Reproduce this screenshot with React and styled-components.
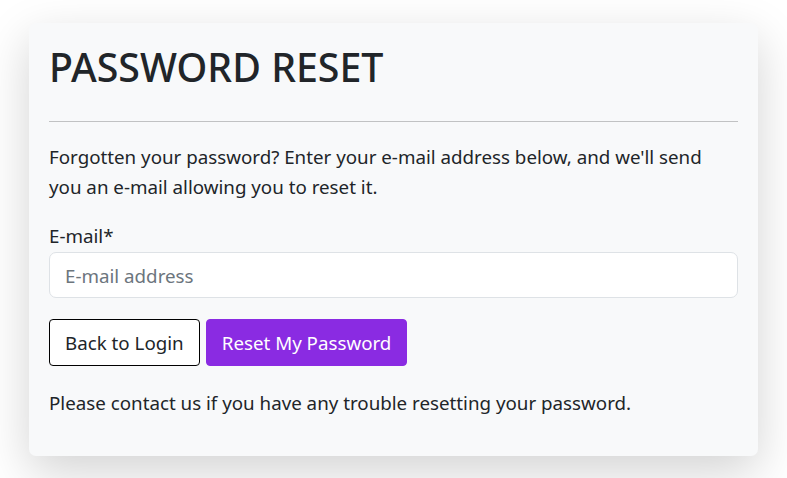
import styled, { createGlobalStyle } from "styled-components";

const GlobalStyles = createGlobalStyle`
  html, body {
    margin: 0;
    min-height: 100%;
    background: #ffffff;
    font-family: "Noto Sans", "Open Sans", sans-serif;
    color: #212529;
  }
  * {
    box-sizing: border-box;
  }
`;

const Page = styled.div`
  min-height: 100vh;
  padding: 23px 29px 40px 29px;
`;

const Card = styled.div`
  width: 729px;
  background: #f8f9fa;
  border-radius: 7px;
  padding: 20px 20px 38px 20px;
  box-shadow: 0 16px 48px rgba(0, 0, 0, 0.175);
`;

const Title = styled.h1`
  margin: 0;
  font-size: 39.3px;
  line-height: 48px;
  font-weight: 500;
  color: #212529;
`;

const Rule = styled.hr`
  margin: 30px 0 20px 0;
  border: 0;
  border-top: 1px solid #c1c2c3;
`;

const Text = styled.p`
  margin: ${(p) => p.$margin || "0"};
  font-size: 18.75px;
  line-height: 30px;
`;

const Label = styled.label`
  display: block;
  margin: 22px 0 4px 0;
  font-size: 18.75px;
  line-height: 24px;
`;

const Input = styled.input`
  display: block;
  width: 100%;
  height: 46px;
  padding: 0 15px;
  font-family: inherit;
  font-size: 18.75px;
  color: #212529;
  background: #ffffff;
  border: 1px solid #dee2e6;
  border-radius: 7px;
  outline: none;

  &::placeholder {
    color: #6c757d;
  }
`;

const Actions = styled.div`
  display: flex;
  gap: 6px;
  margin-top: 21px;
`;

const Button = styled.button`
  height: 47px;
  padding: 0 15px;
  font-family: inherit;
  font-size: 18.75px;
  border-radius: 4px;
  cursor: pointer;
  color: ${(p) => (p.$primary ? "#ffffff" : "#212529")};
  background: ${(p) => (p.$primary ? "#8a2be2" : "#ffffff")};
  border: 1px solid ${(p) => (p.$primary ? "#8a2be2" : "#000000")};
`;

export default function App() {
  return (
    <>
      <GlobalStyles />
      <Page>
        <Card>
          <Title>PASSWORD RESET</Title>
          <Rule />
          <Text>
            Forgotten your password? Enter your e-mail address below, and we'll
            send you an e-mail allowing you to reset it.
          </Text>
          <Label htmlFor="email">E-mail*</Label>
          <Input id="email" type="email" placeholder="E-mail address" />
          <Actions>
            <Button>Back to Login</Button>
            <Button $primary>Reset My Password</Button>
          </Actions>
          <Text $margin="22px 0 0 0">
            Please contact us if you have any trouble resetting your password.
          </Text>
        </Card>
      </Page>
    </>
  );
}
